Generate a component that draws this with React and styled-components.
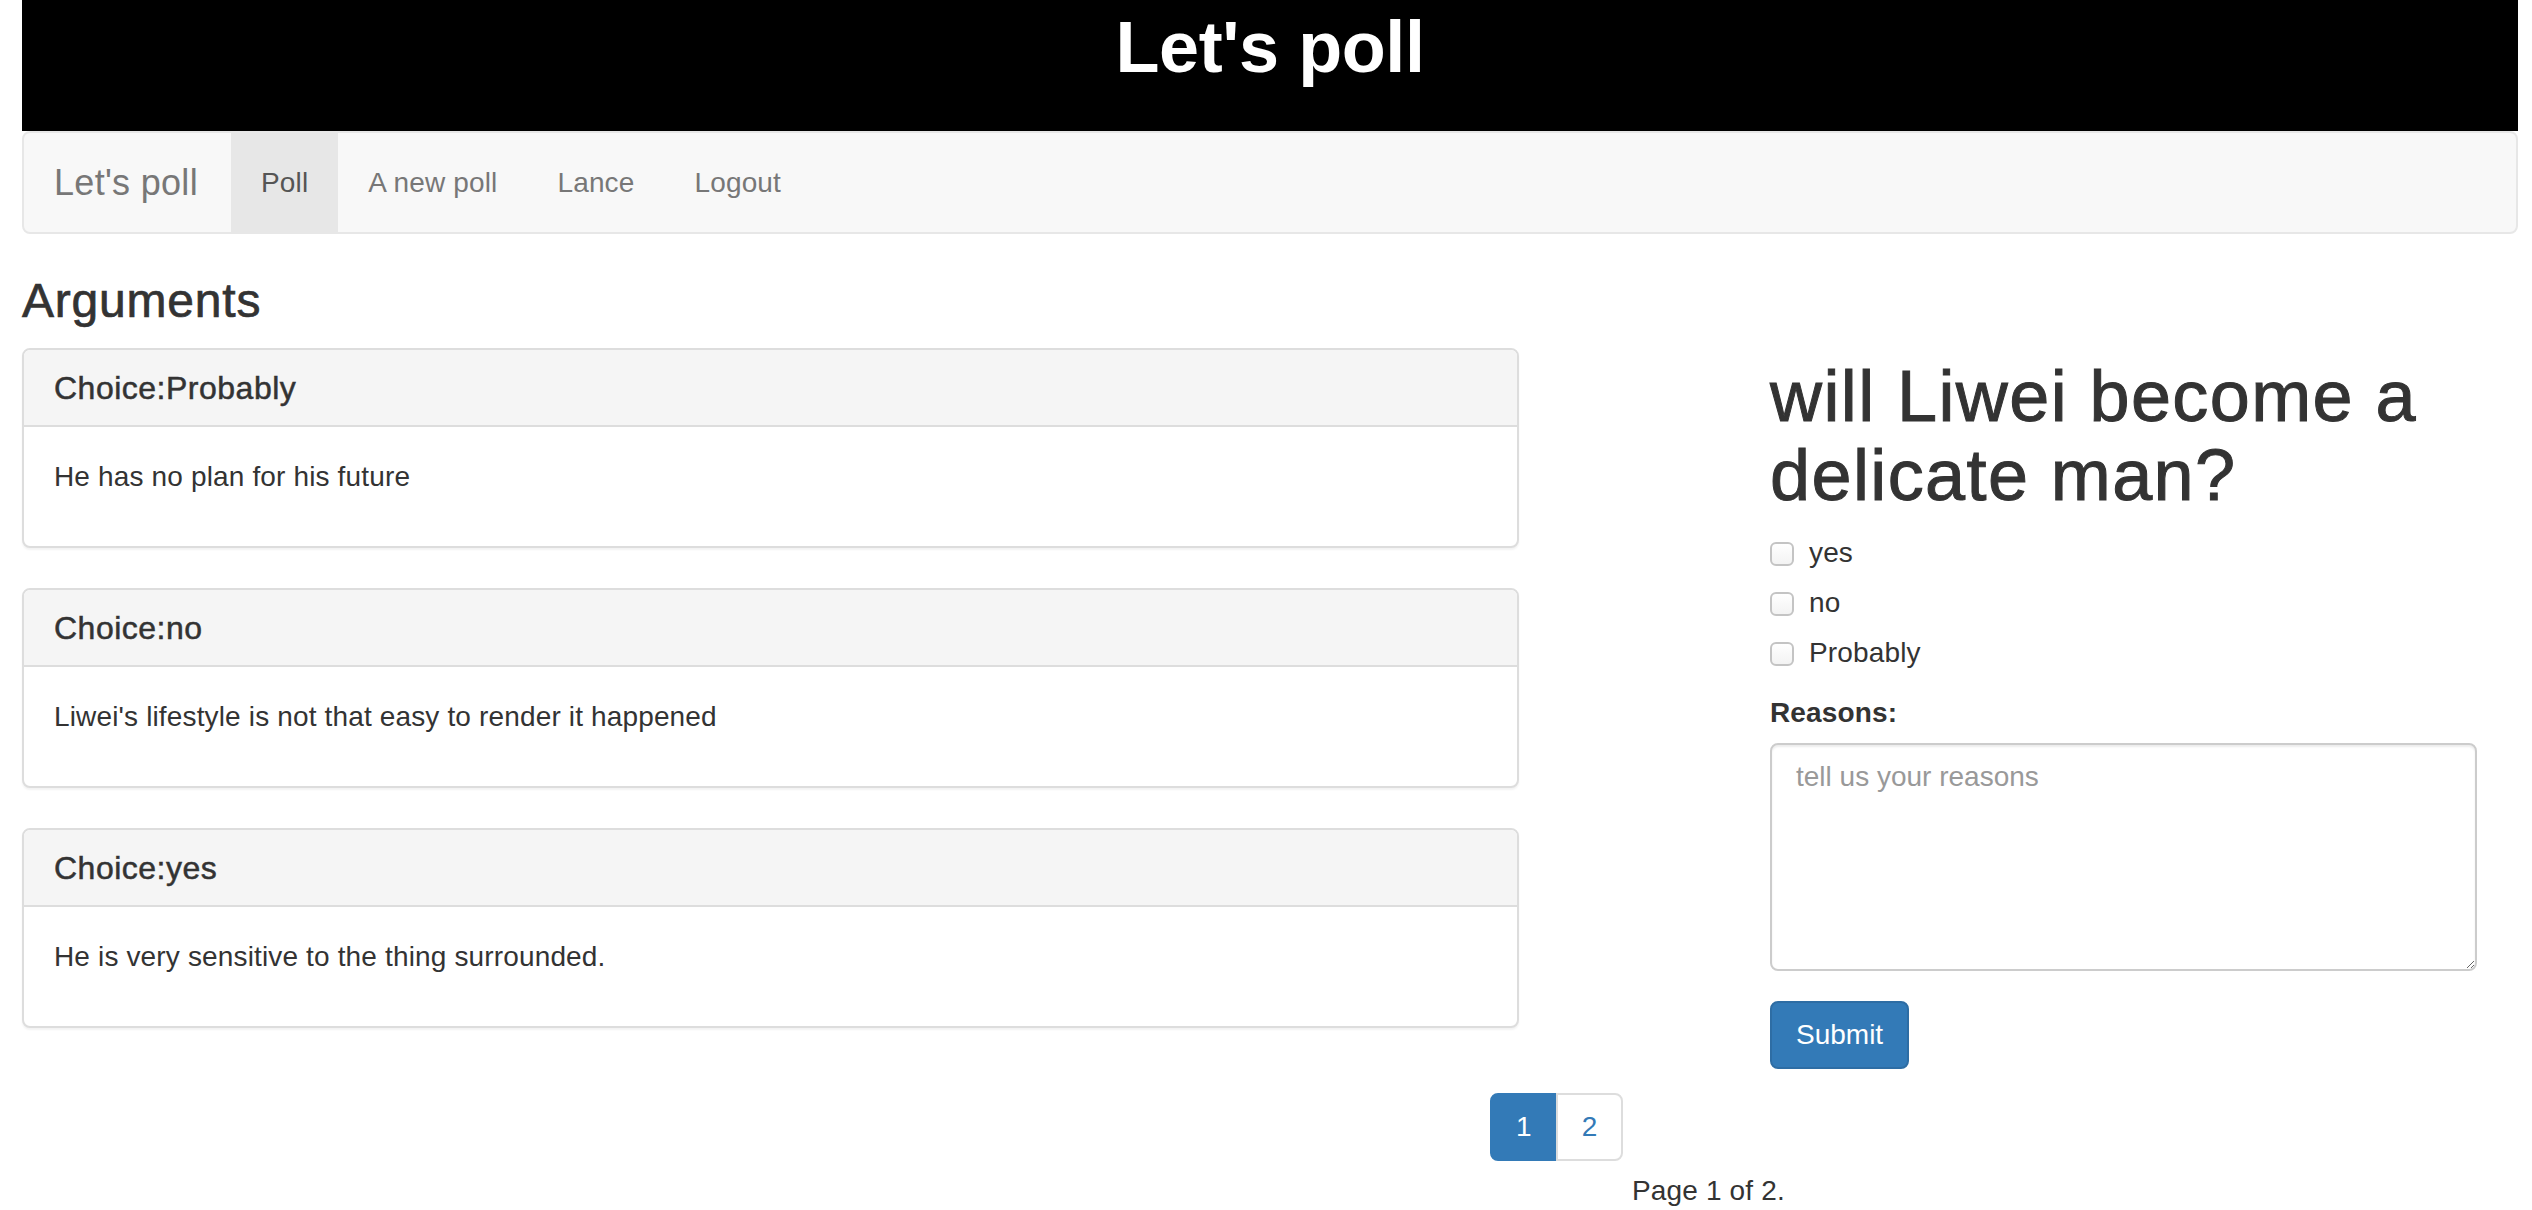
import React from "react";
import styled, { createGlobalStyle } from "styled-components";

const GlobalStyle = createGlobalStyle`
  * {
    box-sizing: border-box;
  }

  body {
    margin: 0;
    background: #fff;
    color: #333;
    font-family: "Liberation Sans", Arial, Helvetica, sans-serif;
    font-size: 28px;
    line-height: 40px;
    letter-spacing: 0.15px;
  }
`;

const Page = styled.div`
  padding: 0 14px 0 22px;
`;

const Banner = styled.header`
  height: 131px;
  padding-top: 8px;
  background: #000;
  text-align: center;

  h1 {
    margin: 0;
    color: #fff;
    font-size: 72px;
    font-weight: 700;
    line-height: 79px;
    letter-spacing: -0.4px;
  }
`;

const Navbar = styled.nav`
  display: flex;
  height: 103px;
  margin-bottom: 40px;
  background: #f8f8f8;
  border: 2px solid #e7e7e7;
  border-radius: 8px;
`;

const Brand = styled.a`
  width: 207px;
  padding: 1px 0 0 30px;
  color: #777;
  font-size: 36px;
  line-height: 97px;
  letter-spacing: 0.3px;
  text-decoration: none;
`;

const NavLink = styled.a`
  padding: 0 30px;
  color: ${(p) => (p.$active ? "#555" : "#777")};
  background: ${(p) => (p.$active ? "#e7e7e7" : "transparent")};
  font-size: 28px;
  line-height: 99px;
  text-decoration: none;
`;

const Main = styled.main`
  display: flex;
  align-items: flex-start;
`;

const LeftCol = styled.section`
  width: 1497px;
  flex-shrink: 0;

  h3 {
    margin: 0 0 20px;
    padding-top: 1px;
    font-size: 48px;
    font-weight: 400;
    line-height: 1.1;
    letter-spacing: 0.8px;
    -webkit-text-stroke: 0.7px #333;
  }
`;

const Panel = styled.div`
  margin-bottom: 40px;
  background: #fff;
  border: 2px solid #ddd;
  border-radius: 8px;
  box-shadow: 0 2px 2px rgba(0, 0, 0, 0.05);
  overflow: hidden;
`;

const PanelHeading = styled.div`
  padding: 21px 30px 19px;
  background: #f5f5f5;
  border-bottom: 2px solid #ddd;
  font-size: 32px;
  line-height: 1.1;
  letter-spacing: 0.5px;
  -webkit-text-stroke: 0.5px #333;
`;

const PanelBody = styled.div`
  padding: 30px;

  p {
    margin: 0 0 19px;
  }
`;

const RightCol = styled.section`
  width: 707px;
  margin-left: 251px;
  padding-top: 83px;

  h1 {
    margin: 0;
    font-size: 72px;
    font-weight: 400;
    line-height: 1.1;
    letter-spacing: 1.4px;
    -webkit-text-stroke: 1px #333;
  }
`;

const Choices = styled.div`
  display: flex;
  flex-direction: column;
  gap: 10px;
  margin-top: 18px;
`;

const CheckRow = styled.label`
  display: flex;
  align-items: center;
  height: 40px;
  gap: 15px;
  cursor: pointer;
`;

const Box = styled.input.attrs({ type: "checkbox" })`
  appearance: none;
  width: 24px;
  height: 24px;
  margin: 2px 0 0;
  border: 2px solid #c4c4c4;
  border-radius: 6px;
  background: linear-gradient(#fff, #f3f3f3);
`;

const FieldLabel = styled.label`
  display: block;
  margin: 20px 0 10px;
  font-weight: 700;
`;

const Reasons = styled.textarea`
  display: block;
  width: 100%;
  height: 228px;
  padding: 12px 24px;
  border: 2px solid #ccc;
  border-radius: 8px;
  box-shadow: inset 0 2px 2px rgba(0, 0, 0, 0.075);
  color: #555;
  font-family: inherit;
  font-size: 28px;
  line-height: 40px;

  &::placeholder {
    color: #999;
  }
`;

const SubmitButton = styled.button`
  margin-top: 30px;
  padding: 12px 24px;
  color: #fff;
  background: #337ab7;
  border: 2px solid #2e6da4;
  border-radius: 8px;
  font-family: inherit;
  font-size: 28px;
  line-height: 40px;
`;

const Pager = styled.div`
  margin-top: 24px;
  padding-left: 1468px;
`;

const Pagination = styled.ul`
  display: flex;
  margin: 0;
  padding: 0;
  list-style: none;
`;

const PageItem = styled.li`
  margin-left: -2px;
  padding: 12px 24px;
  color: ${(p) => (p.$active ? "#fff" : "#337ab7")};
  background: ${(p) => (p.$active ? "#337ab7" : "#fff")};
  border: 2px solid ${(p) => (p.$active ? "#337ab7" : "#ddd")};
  line-height: 40px;

  &:first-child {
    margin-left: 0;
    border-radius: 8px 0 0 8px;
  }

  &:last-child {
    border-radius: 0 8px 8px 0;
  }
`;

const PageInfo = styled.p`
  margin: 10px 0 0 142px;
`;

const args = [
  { choice: "Probably", text: "He has no plan for his future" },
  { choice: "no", text: "Liwei's lifestyle is not that easy to render it happened" },
  { choice: "yes", text: "He is very sensitive to the thing surrounded." },
];

const App = () => {
  return (
    <Page>
      <GlobalStyle />
      <Banner>
        <h1>Let's poll</h1>
      </Banner>
      <Navbar>
        <Brand href="#">Let's poll</Brand>
        <NavLink href="#" $active>
          Poll
        </NavLink>
        <NavLink href="#">A new poll</NavLink>
        <NavLink href="#">Lance</NavLink>
        <NavLink href="#">Logout</NavLink>
      </Navbar>
      <Main>
        <LeftCol>
          <h3>Arguments</h3>
          {args.map((a) => (
            <Panel key={a.choice}>
              <PanelHeading>Choice:{a.choice}</PanelHeading>
              <PanelBody>
                <p>{a.text}</p>
              </PanelBody>
            </Panel>
          ))}
        </LeftCol>
        <RightCol>
          <h1>will Liwei become a delicate man?</h1>
          <Choices>
            {["yes", "no", "Probably"].map((c) => (
              <CheckRow key={c}>
                <Box />
                {c}
              </CheckRow>
            ))}
          </Choices>
          <FieldLabel>Reasons:</FieldLabel>
          <Reasons placeholder="tell us your reasons" />
          <SubmitButton type="submit">Submit</SubmitButton>
        </RightCol>
      </Main>
      <Pager>
        <Pagination>
          <PageItem $active>1</PageItem>
          <PageItem>2</PageItem>
        </Pagination>
        <PageInfo>Page 1 of 2.</PageInfo>
      </Pager>
    </Page>
  );
};

export default App;
